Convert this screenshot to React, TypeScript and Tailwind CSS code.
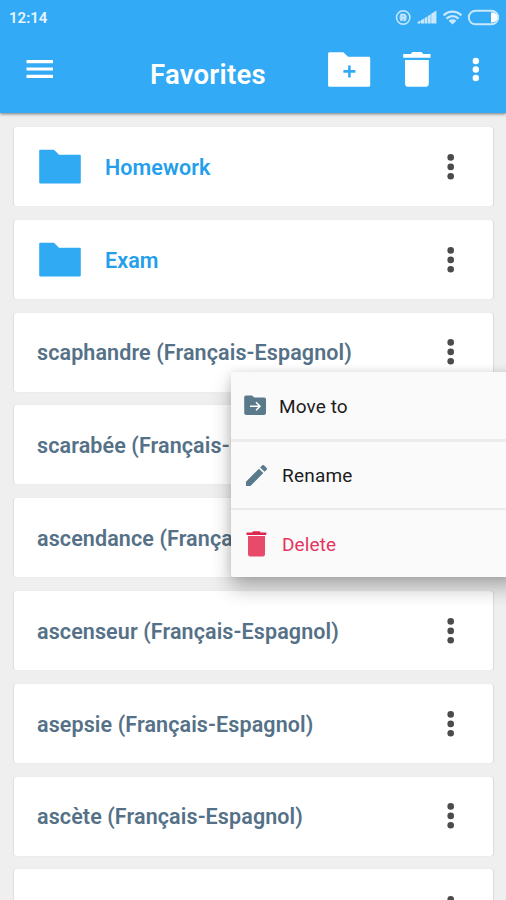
import { useState } from 'react';

const folders = ['Homework', 'Exam'];

const words = [
  'scaphandre (Français-Espagnol)',
  'scarabée (Français-Espagnol)',
  'ascendance (Français-Espagnol)',
  'ascenseur (Français-Espagnol)',
  'asepsie (Français-Espagnol)',
  'ascète (Français-Espagnol)',
  '',
];

function StatusIcons() {
  return (
    <svg width="112" height="20" viewBox="-6 0 112 20" fill="none" className="text-[#c9e8fd]">
      {/* Notification badge */}
      <circle cx="3.2" cy="9.5" r="6.7" stroke="currentColor" strokeWidth="1.5" />
      <path d="M1.2 13V6.500h2.400a1.800 1.800 0 0 1 .6 3.500l1.200 3M1.200 10h3" stroke="currentColor" strokeWidth="1.500" />
      <circle cx="3.2" cy="9.5" r="3.800" fill="currentColor" opacity="0.6" />
      {/* Signal */}
      <path d="M17.500 15.500v-1.500l3-1.400v2.900zM21 15.500v-3.300l3-1.600v4.900zM24.500 15.500v-5.300l2.900-1.700v7zM27.900 15.500V8l2.800-1.700v9.200zM31.200 15.500V5.700l5.200-3.200v13z" fill="currentColor" />
      {/* Wifi */}
      <g stroke="currentColor" strokeWidth="2.300">
        <path d="M43.600 7.400c5.200-5 12.600-5 17.800 0" />
        <path d="M46.500 10.600c3.500-3.200 8.500-3.200 12 0" />
      </g>
      <path d="M48.600 12.700c2.300-1.900 5.500-1.900 7.800 0l-3.900 3.900z" fill="currentColor" />
      {/* Battery */}
      <rect x="68.800" y="2.700" width="29.400" height="13.600" rx="6.800" stroke="currentColor" strokeWidth="1.900" />
      <path d="M91 4.500h1.500a5 5 0 0 1 0 10h-1.500z" fill="#fff" />
    </svg>
  );
}

function FolderIcon() {
  return (
    <svg width="42" height="35" viewBox="0 0 42 35">
      <path d="M1 .8h14l5 5h21a.8.8 0 0 1 .8.8v27a.8.8 0 0 1-.8.8H1a.8.8 0 0 1-.8-.8v-32A.8.8 0 0 1 1 .8z" fill="#31aaf4" />
    </svg>
  );
}

function CardDots() {
  return (
    <button className="mt-[0.5px] block" aria-label="Options">
      <svg width="8" height="28" viewBox="0 0 8 28" fill="#4b4b4b">
        <circle cx="3.7" cy="4.4" r="3.3" />
        <circle cx="3.7" cy="13.900" r="3.3" />
        <circle cx="3.7" cy="23.300" r="3.3" />
      </svg>
    </button>
  );
}

function Header() {
  return (
    <header className="relative z-10 h-[113px] bg-[#32aaf5] text-white shadow-[0_1px_3px_rgba(0,0,0,0.5)]">
      <div className="flex h-[36px] justify-between pl-[9px]">
        <span className="pt-[8px] text-[15px] leading-[20px] font-semibold text-[#e8f5fe]">12:14</span>
        <div className="w-[112px] pt-[8px]">
          <StatusIcons />
        </div>
      </div>
      <div className="flex h-[77px] items-start">
        <button className="ml-[26px] pt-[24px]" aria-label="Menu">
          <svg width="28" height="20" viewBox="0 0 28 20" fill="#fff">
            <path d="M.5 0h26.500v3.200H.5zM.5 7.400h26.500v3.200H.5zM.5 14.800h26.500V18H.5z" />
          </svg>
        </button>
        <h1 className="ml-[96px] w-[178px] pt-[23px] text-[27.500px] leading-[32px] font-semibold tracking-[0.25px]">Favorites</h1>
        <button className="pt-[16px]" aria-label="New folder">
          <svg width="43" height="35" viewBox="0 0 43 35">
            <path d="M1.500.2h13.800l4.800 4.600h20.700A1.400 1.400 0 0 1 42.200 6.200v27.200a1.400 1.400 0 0 1-1.400 1.400H1.500A1.400 1.400 0 0 1 .1 33.400V1.600A1.400 1.400 0 0 1 1.500.2z" fill="#fff" />
            <path d="M21.400 13.400v12M15.400 19.400h12" stroke="#32aaf5" strokeWidth="2.600" />
          </svg>
        </button>
        <button className="ml-[32px] pt-[16px]" aria-label="Delete all">
          <svg width="28" height="35" viewBox="0 0 28 35" fill="#fff">
            <path d="M.2 2h7.500L9.500 0h9l1.800 2h7.200v3.800H.2zM2 8h23.800v23.400a3.400 3.400 0 0 1-3.400 3.400h-17A3.400 3.400 0 0 1 2 31.400z" />
          </svg>
        </button>
        <button className="ml-[41px] pt-[21px]" aria-label="More">
          <svg width="8" height="26" viewBox="0 0 8 26" fill="#fff">
            <circle cx="3.800" cy="4" r="3.200" />
            <circle cx="3.800" cy="12.500" r="3.200" />
            <circle cx="3.800" cy="21" r="3.200" />
          </svg>
        </button>
      </div>
    </header>
  );
}

function ContextMenu() {
  return (
    <div className="absolute top-[372px] left-[231px] z-20 h-[205px] w-[290px] rounded-[2px] bg-[#fafafa] text-[19px] text-[#1c1c1c] shadow-[0_11px_20px_rgba(0,0,0,0.28),0_0_8px_rgba(0,0,0,0.1)]">
      <button className="flex h-[70px] w-full items-center border-b-[3px] border-[#ececec] pl-[13px]">
        <svg width="23" height="21" viewBox="0 0 23 21" className="-mt-[1px]">
          <path d="M2 .5h6l2.200 2h10A1.800 1.800 0 0 1 22 4.300v13.800a1.800 1.800 0 0 1-1.800 1.800H2A1.800 1.800 0 0 1 .2 18.100V2.300A1.800 1.800 0 0 1 2 .5z" fill="#5a7a8c" />
          <path d="M6 11.200h10M12 7.200l4 4-4 4" fill="none" stroke="#fff" strokeWidth="1.500" />
        </svg>
        <span className="ml-[12px] pt-[3px] tracking-[0.1px]">Move to</span>
      </button>
      <button className="flex h-[68px] w-full items-center border-b-[2px] border-[#ebebeb] pl-[15px]">
        <svg width="21" height="21" viewBox="3 3 18 18" fill="#5a7a8c">
          <path d="M3 17.250V21h3.750L17.810 9.940l-3.750-3.750L3 17.250zM20.710 7.040a1 1 0 0 0 0-1.410l-2.340-2.340a1 1 0 0 0-1.410 0l-1.830 1.830 3.750 3.750 1.830-1.830z" />
        </svg>
        <span className="ml-[15px] pt-[2px] tracking-[0.2px]">Rename</span>
      </button>
      <button className="flex h-[67px] w-full items-center pl-[15px] text-[#e23560]">
        <svg width="21" height="26" viewBox="0 0 21 26">
          <path d="M.5 1.500h5.500L7.200.2h6.300l1.300 1.300h5.500v2.500H.5z" fill="#dc2750" />
          <path d="M2 5h17v18.200a2.200 2.200 0 0 1-2.200 2.200H4.200A2.200 2.200 0 0 1 2 23.200z" fill="#e84a69" />
        </svg>
        <span className="ml-[15px] pt-[3px] tracking-[0.1px]">Delete</span>
      </button>
    </div>
  );
}

export default function App() {
  const [menuOpen] = useState(true);

  return (
    <div className="relative h-[900px] w-[506px] overflow-hidden bg-[#efefef] font-['Roboto','Liberation_Sans',sans-serif]">
      <Header />
      <main className="flex flex-col gap-[13.8px] pt-[14px] pr-[13px] pl-[14px]">
        {folders.map((name) => (
          <div key={name} className="flex h-[79px] shrink-0 items-center rounded-[3px] bg-white pr-[38px] pl-[25px] shadow-[1px_0_1px_rgba(0,0,0,0.09),-1px_0_1px_rgba(0,0,0,0.07)]">
            <FolderIcon />
            <span className="ml-[24px] flex-1 pt-[3px] text-[21.500px] font-semibold tracking-[0.1px] text-[#259feb]">{name}</span>
            <CardDots />
          </div>
        ))}
        {words.map((word) => (
          <div key={word} className="flex h-[79px] shrink-0 items-center rounded-[3px] bg-white pr-[38px] pl-[23px] shadow-[1px_0_1px_rgba(0,0,0,0.09),-1px_0_1px_rgba(0,0,0,0.07)]">
            <span className="flex-1 pt-[3px] text-[21.500px] font-semibold tracking-[0.11px] text-[#557187]">{word}</span>
            <CardDots />
          </div>
        ))}
      </main>
      {menuOpen && <ContextMenu />}
    </div>
  );
}
